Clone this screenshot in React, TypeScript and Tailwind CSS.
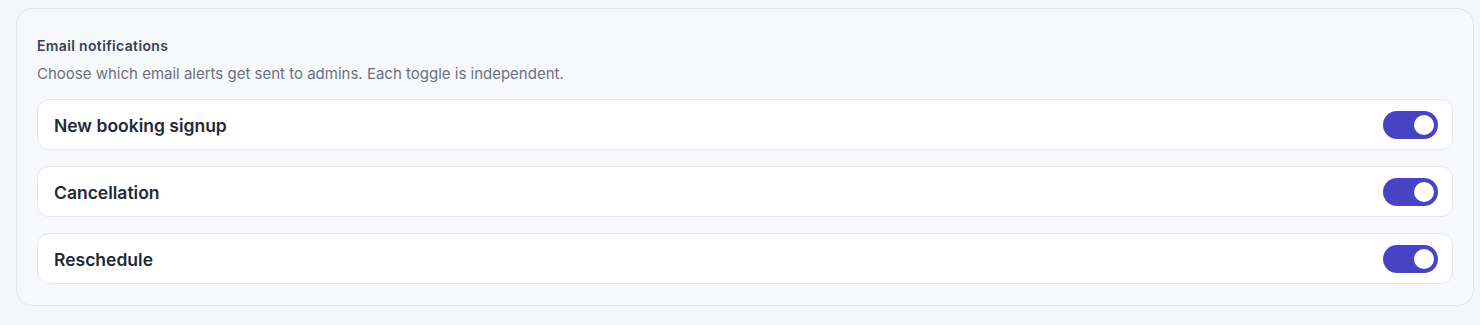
import React, { useState } from 'react';

const items = [
  { id: 'signup', label: 'New booking signup' },
  { id: 'cancel', label: 'Cancellation' },
  { id: 'reschedule', label: 'Reschedule' },
];

const Toggle: React.FC<{ on: boolean; onChange: () => void }> = ({ on, onChange }) => (
  <button
    type="button"
    onClick={onChange}
    className={`relative flex items-center w-[55px] h-[28px] rounded-full px-1 transition-colors ${
      on ? 'bg-[#4843c4] justify-end' : 'bg-gray-300 justify-start'
    }`}
  >
    <span className="block w-5 h-5 rounded-full bg-white" />
  </button>
);

export default function App() {
  const [state, setState] = useState<Record<string, boolean>>({
    signup: true,
    cancel: true,
    reschedule: true,
  });

  return (
    <div className="min-h-screen bg-[#f4f6fb] pt-2 pb-5 pl-4 pr-[6px] font-['Inter',sans-serif]">
      <div className="bg-[#f7f8fc] border border-[#e3e6ee] rounded-2xl px-5 pt-[27px] pb-[21px]">
        <h2 className="text-sm leading-5 font-semibold tracking-wide text-[#374151]">Email notifications</h2>
        <p className="mt-2 text-[15px] leading-5 text-[#6b7280]">
          Choose which email alerts get sent to admins. Each toggle is independent.
        </p>
        <div className="mt-[15px] flex flex-col gap-4">
          {items.map((item) => (
            <div
              key={item.id}
              className="flex items-center justify-between h-[51px] bg-white border border-[#e5e7eb] rounded-xl pl-4 pr-[14px]"
            >
              <span className="pt-1 text-[17.5px] font-semibold text-[#1f2937]">{item.label}</span>
              <Toggle
                on={state[item.id]}
                onChange={() => setState((s) => ({ ...s, [item.id]: !s[item.id] }))}
              />
            </div>
          ))}
        </div>
      </div>
    </div>
  );
}
